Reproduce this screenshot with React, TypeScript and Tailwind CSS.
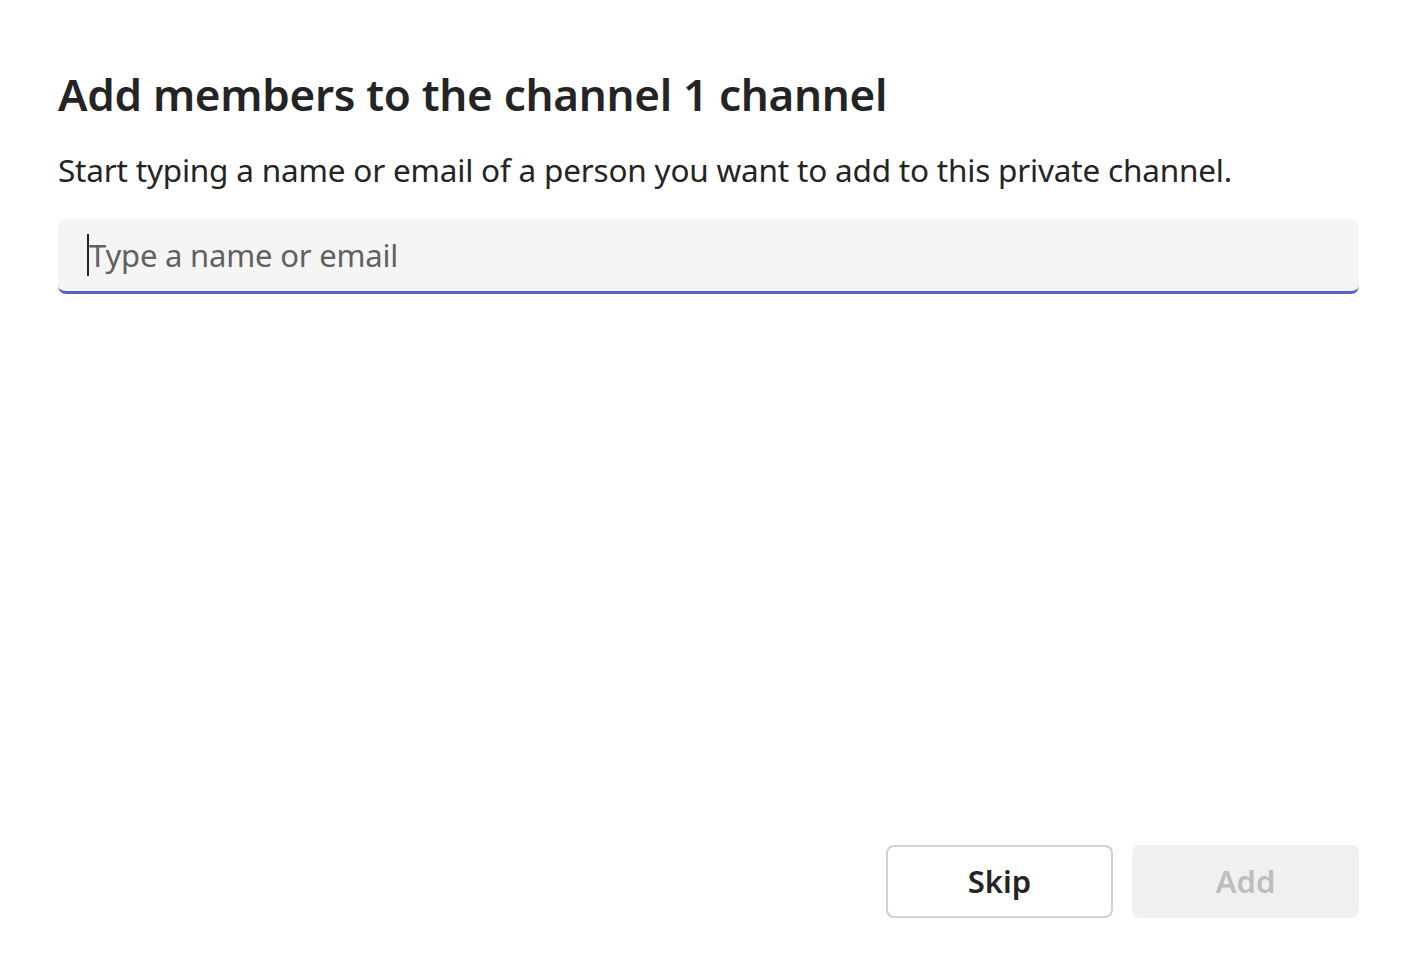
import React from "react";

export default function App() {
  return (
    <div
      className="flex h-[978px] w-[1417px] flex-col bg-white px-[58px] pt-[66px] pb-[60px] text-[#242424]"
      style={{ fontFamily: '"Noto Sans", "Open Sans", sans-serif' }}
    >
      <h1 className="text-[44px] font-semibold leading-[56px] tracking-[-0.3px]">
        Add members to the channel 1 channel
      </h1>
      <p className="mt-[28px] text-[31.5px] leading-[40px] tracking-[-0.2px]">
        Start typing a name or email of a person you want to add to this private channel.
      </p>
      <div className="mt-[29px] flex h-[75px] items-center rounded-[8px] border-b-[3px] border-[#5b5fc7] bg-[#f5f5f5] pl-[29px]">
        <span className="h-[42px] w-[2px] bg-[#242424]" />
        <span className="text-[31px] text-[#616161] tracking-[-0.2px]">Type a name or email</span>
      </div>
      <div className="flex-1" />
      <div className="flex justify-end gap-[19px]">
        <button className="flex h-[73px] w-[227px] items-center justify-center rounded-[8px] border-2 border-[#d1d1d1] bg-white text-[31px] font-semibold text-[#242424]">
          Skip
        </button>
        <button className="flex h-[73px] w-[227px] items-center justify-center rounded-[8px] bg-[#f0f0f0] text-[31px] font-semibold text-[#bdbdbd]">
          Add
        </button>
      </div>
    </div>
  );
}
